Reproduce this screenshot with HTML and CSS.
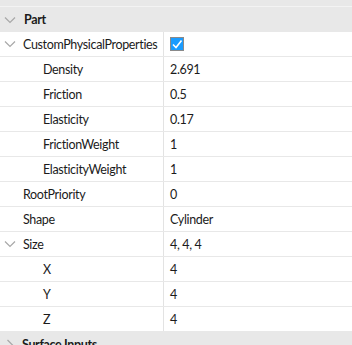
FILE: index.html
```html
<!DOCTYPE html>
<html lang="en">
<head>
    <meta charset="UTF-8">
    <title>Properties</title>
    <link rel="stylesheet" href="styles.css">
</head>
<body>
    <div class="panel">
        <div class="top-strip"></div>

        <!-- Part section -->
        <div class="section">
            <span class="chev down"><svg viewBox="0 0 12 8" width="12" height="8"><path d="M1 1.5 L6 6.5 L11 1.5" /></svg></span>
            <span class="section-name">Part</span>
        </div>

        <div class="row">
            <div class="name lvl1">
                <span class="chev down"><svg viewBox="0 0 12 8" width="12" height="8"><path d="M1 1.5 L6 6.5 L11 1.5" /></svg></span>
                CustomPhysicalProperties
            </div>
            <div class="value">
                <span class="checkbox"><svg viewBox="0 0 14 14" width="14" height="14"><path d="M3 7.5 L6 10.5 L11.5 3.5" /></svg></span>
            </div>
        </div>
        <div class="row">
            <div class="name lvl2">Density</div>
            <div class="value">2.691</div>
        </div>
        <div class="row">
            <div class="name lvl2">Friction</div>
            <div class="value">0.5</div>
        </div>
        <div class="row">
            <div class="name lvl2">Elasticity</div>
            <div class="value">0.17</div>
        </div>
        <div class="row">
            <div class="name lvl2">FrictionWeight</div>
            <div class="value">1</div>
        </div>
        <div class="row">
            <div class="name lvl2">ElasticityWeight</div>
            <div class="value">1</div>
        </div>
        <div class="row">
            <div class="name lvl1">RootPriority</div>
            <div class="value">0</div>
        </div>
        <div class="row">
            <div class="name lvl1">Shape</div>
            <div class="value">Cylinder</div>
        </div>
        <div class="row">
            <div class="name lvl1">
                <span class="chev down"><svg viewBox="0 0 12 8" width="12" height="8"><path d="M1 1.5 L6 6.5 L11 1.5" /></svg></span>
                Size
            </div>
            <div class="value">4, 4, 4</div>
        </div>
        <div class="row">
            <div class="name lvl2">X</div>
            <div class="value">4</div>
        </div>
        <div class="row">
            <div class="name lvl2">Y</div>
            <div class="value">4</div>
        </div>
        <div class="row">
            <div class="name lvl2">Z</div>
            <div class="value">4</div>
        </div>

        <!-- Surface Inputs section (collapsed) -->
        <div class="section">
            <span class="chev right"><svg viewBox="0 0 8 12" width="8" height="12"><path d="M1.5 1 L6.5 6 L1.5 11" /></svg></span>
            <span class="section-name">Surface Inputs</span>
        </div>
    </div>
</body>
</html>
```

FILE: styles.css
```css
* {
    margin: 0;
    padding: 0;
    box-sizing: border-box;
}

body {
    font-family: Lato, "Open Sans", sans-serif;
    font-size: 12.5px;
    letter-spacing: -0.35px;
    color: #1b1b1b;
    background-color: #fff;
    overflow: hidden;
}

.panel {
    width: 352px;
}

.top-strip {
    height: 7px;
    background-color: #e8e8e8;
    border-bottom: 1px solid #f3f3f3;
}

/* Section headers */
.section {
    display: flex;
    align-items: center;
    height: 25px;
    background-color: #e8e8e8;
}

.section-name {
    font-weight: bold;
    margin-left: 8px;
}

/* Property rows */
.row {
    display: grid;
    grid-template-columns: 164px 1fr;
    height: 25px;
    border-bottom: 1px solid #e8e8e8;
}

.name {
    display: flex;
    align-items: center;
    border-right: 1px solid #e3e3e3;
    white-space: nowrap;
}

.lvl1 {
    padding-left: 23px;
}

.lvl2 {
    padding-left: 43px;
}

.name .chev {
    margin-left: -19px;
    margin-right: 7px;
}

.value {
    display: flex;
    align-items: center;
    padding-left: 6px;
}

/* Chevrons */
.chev {
    display: flex;
    align-items: center;
    justify-content: center;
    width: 12px;
}

.section .chev {
    margin-left: 4px;
}

.chev svg path {
    fill: none;
    stroke: #a8a8a8;
    stroke-width: 1.2;
}

.chev.right {
    margin-left: 6px;
    width: 8px;
}

/* Checkbox */
.checkbox {
    display: flex;
    width: 14px;
    height: 14px;
    background-color: #1a9cff;
    border: 1px solid #8a8a8a;
}

.checkbox svg {
    margin: -1px;
}

.checkbox svg path {
    fill: none;
    stroke: #fff;
    stroke-width: 1.6;
}
```
